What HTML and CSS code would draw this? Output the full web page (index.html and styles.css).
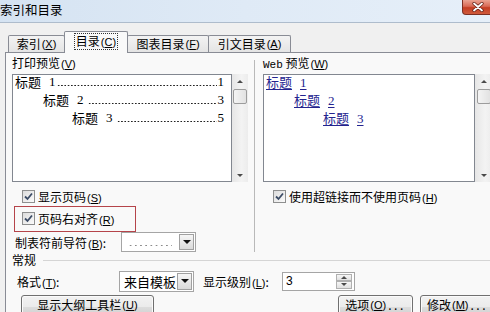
FILE: index.html
```html
<!DOCTYPE html>
<html lang="zh-CN">
<head>
<meta charset="utf-8">
<title>索引和目录</title>
<link rel="stylesheet" href="styles.css">
</head>
<body>
<div class="window">
  <div class="titlebar">
    <span class="title">索引和目录</span>
    <span class="close">
      <svg width="14" height="10" viewBox="0 0 14 10"><path d="M3 1.5 L11 8.5 M11 1.5 L3 8.5" stroke="#5a1a10" stroke-width="3.2" stroke-linecap="round"/><path d="M3 1.5 L11 8.5 M11 1.5 L3 8.5" stroke="#fff" stroke-width="1.8" stroke-linecap="round"/></svg>
    </span>
  </div>

  <div class="tabs">
    <div class="tab t1">索引<span class="mn">(<u>X</u>)</span></div>
    <div class="tab t2 active"><span class="focus">目录<span class="mn">(<u>C</u>)</span></span></div>
    <div class="tab t3">图表目录<span class="mn">(<u>F</u>)</span></div>
    <div class="tab t4">引文目录<span class="mn">(<u>A</u>)</span></div>
  </div>

  <div class="panel">
    <div class="upper">
      <div class="col col-left">
        <div class="label">打印预览<span class="mn">(<u>V</u>)</span></div>
        <div class="preview">
          <div class="pbox">
            <div class="toc lv1"><span class="h">标题</span><span class="num">1</span><span class="dots"></span><span class="pg">1</span></div>
            <div class="toc lv2"><span class="h">标题</span><span class="num">2</span><span class="dots gap"></span><span class="pg">3</span></div>
            <div class="toc lv3"><span class="h">标题</span><span class="num">3</span><span class="dots gap"></span><span class="pg">5</span></div>
          </div>
          <div class="vscroll"><span class="arr up"></span><span class="thumb"></span><span class="fill"></span><span class="arr down"></span></div>
        </div>
        <div class="check-row">
          <span class="cb"><svg width="9" height="9" viewBox="0 0 9 9"><path d="M1 4.5 L3.5 7 L8 1.5" fill="none" stroke="#3c4c66" stroke-width="1.8"/></svg></span>
          <span>显示页码<span class="mn">(<u>S</u>)</span></span>
        </div>
        <div class="highlight">
          <div class="check-row inner">
            <span class="cb"><svg width="9" height="9" viewBox="0 0 9 9"><path d="M1 4.5 L3.5 7 L8 1.5" fill="none" stroke="#3c4c66" stroke-width="1.8"/></svg></span>
            <span>页码右对齐<span class="mn">(<u>R</u>)</span></span>
          </div>
        </div>
        <div class="field-row leader-row">
          <span class="flabel">制表符前导符<span class="mn">(<u>B</u>)</span>:</span>
          <div class="select"><span class="val leader"></span><span class="dd"></span></div>
        </div>
      </div>

      <div class="sep"></div>

      <div class="col col-right">
        <div class="label"><span class="web">Web</span> 预览<span class="mn">(<u>W</u>)</span></div>
        <div class="preview">
          <div class="pbox wbox">
            <div class="wl lv1"><span class="lnk">标题<span class="num">1</span></span></div>
            <div class="wl lv2"><span class="lnk">标题<span class="num">2</span></span></div>
            <div class="wl lv3"><span class="lnk">标题<span class="num">3</span></span></div>
          </div>
          <div class="vscroll wide"><span class="arr up"></span><span class="thumb"></span><span class="fill"></span><span class="arr down"></span></div>
        </div>
        <div class="check-row">
          <span class="cb"><svg width="9" height="9" viewBox="0 0 9 9"><path d="M1 4.5 L3.5 7 L8 1.5" fill="none" stroke="#3c4c66" stroke-width="1.8"/></svg></span>
          <span>使用超链接而不使用页码<span class="mn">(<u>H</u>)</span></span>
        </div>
      </div>
    </div>

    <div class="group"><span class="gtitle">常规</span><span class="gline"></span></div>

    <div class="field-row format-row">
      <span class="flabel">格式<span class="mn">(<u>T</u>)</span>:</span>
      <div class="select"><span class="val">来自模板</span><span class="dd"></span></div>
      <span class="flabel level">显示级别<span class="mn">(<u>L</u>)</span>:</span>
      <div class="spin"><span class="sval">3</span><span class="sbtns"><span class="sb up"></span><span class="sb down"></span></span></div>
    </div>

    <div class="buttons">
      <div class="btn b-outline">显示大纲工具栏<span class="mn">(<u>U</u>)</span></div>
      <div class="spacer"></div>
      <div class="btn b-opt">选项<span class="mn">(<u>O</u>)</span><span class="ell">...</span></div>
      <div class="btn b-mod">修改<span class="mn">(<u>M</u>)</span><span class="ell">...</span></div>
    </div>
  </div>
</div>
</body>
</html>
```

FILE: styles.css
```css
* { box-sizing: border-box; }
html, body { margin: 0; padding: 0; }
body {
  width: 490px;
  height: 312px;
  overflow: hidden;
  background: #f0f0f0;
  font-family: "Noto Sans CJK SC", sans-serif;
  font-size: 12px;
  color: #000;
}
.window { width: 490px; height: 312px; overflow: hidden; }

.mn { font-family: "Liberation Sans", sans-serif; font-size: 11px; margin-left: 1px; }
.mn u { text-decoration-thickness: 1px; text-underline-offset: 1px; }

/* title bar */
.titlebar {
  height: 23px;
  display: flex;
  justify-content: space-between;
  align-items: flex-start;
  background: linear-gradient(90deg, #d5e3f2 0%, #dfeaf6 50%, #e6eff9 100%);
  border-bottom: 1px solid #aebccc;
}
.title { font-size: 12.5px; line-height: 20px; }
.close {
  width: 31px;
  height: 15px;
  margin-right: -3px;
  border: 1px solid #7c2f22;
  border-top: none;
  border-radius: 0 0 0 4px;
  background: linear-gradient(#eaa392 0%, #d96a55 45%, #c43d22 55%, #cf5a3c 100%);
  display: flex;
  align-items: center;
  justify-content: center;
}

/* tabs */
.tabs {
  height: 29px;
  display: flex;
  align-items: flex-end;
  padding-left: 8px;
}
.tab {
  height: 17px;
  border: 1px solid #898c95;
  border-bottom: none;
  margin-left: -1px;
  background: linear-gradient(#f3f3f3, #e4e4e4);
  display: flex;
  align-items: center;
  justify-content: center;
  line-height: 14px;
  border-radius: 2px 2px 0 0;
}
.t1 { width: 57px; margin-left: 0; }
.t2 { width: 64px; }
.t3 { width: 82px; }
.t4 { width: 83px; }
.tab.active {
  height: 22px;
  margin-bottom: -1px;
  background: #f9f9f9;
  position: relative;
  z-index: 1;
  padding-bottom: 3px;
}
.focus { border: 1px dotted #333; padding: 0 1px; line-height: 14px; }

/* panel */
.panel {
  margin-left: 5px;
  width: 500px;
  height: 270px;
  border: 1px solid #898c95;
  background: #f9f9f9;
  padding: 2px 0 0 6px;
}
.upper { display: flex; height: 197px; }
.col-left { width: 236px; }
.sep { width: 1px; margin: 5px 8px 0 6px; background: #b9b9b9; }
.col-right { width: 240px; }

.label { height: 16px; line-height: 16px; }
.web { font-family: "Liberation Mono", monospace; font-size: 11px; }

.preview { display: flex; margin-top: 3px; height: 108px; }
.pbox {
  width: 220px;
  height: 108px;
  border: 1px solid #828790;
  background: #fff;
  padding: 0 7px 0 2px;
}
.wbox { width: 212px; }
.toc {
  display: flex;
  align-items: flex-start;
  height: 18px;
  line-height: 14px;
  font-size: 13px;
  white-space: nowrap;
}
.toc .num, .wl .num { font-family: "Liberation Serif", serif; font-size: 13px; margin-left: 8px; }
.dots {
  flex: 1;
  height: 14px;
  margin: 0 1px 0 1px;
  background-image: radial-gradient(circle at 50% 50%, #222 0.65px, transparent 1px);
  background-size: 3.3px 3px;
  background-repeat: repeat-x;
  background-position: 0 9px;
}
.dots.gap { margin-left: 4px; }
.pg { font-family: "Liberation Serif", serif; font-size: 13px; }
.lv1 { padding-left: 0; }
.lv2 { padding-left: 28px; }
.lv3 { padding-left: 57px; }

.wl { height: 18px; line-height: 14px; font-size: 13px; white-space: nowrap; }
.lnk { color: #24248f; text-decoration: underline; text-decoration-thickness: 1px; text-underline-offset: 2px; }

.vscroll {
  width: 16px;
  height: 108px;
  display: flex;
  flex-direction: column;
  align-items: center;
  background: linear-gradient(90deg, #e6e6e6, #f3f3f3 60%, #ececec);
}
.vscroll.wide { width: 17px; }
.arr { width: 100%; height: 14px; display: flex; align-items: center; justify-content: center; }
.arr.up::after { content: ""; border-left: 3px solid transparent; border-right: 3px solid transparent; border-bottom: 3px solid #4a4a4a; }
.arr.down::after { content: ""; border-left: 3px solid transparent; border-right: 3px solid transparent; border-top: 3px solid #4a4a4a; }
.thumb {
  width: 14px;
  height: 15px;
  margin-top: 1px;
  border: 1px solid #9c9c9c;
  border-radius: 2px;
  background: linear-gradient(90deg, #f4f4f4, #e2e2e2);
}
.fill { flex: 1; }

/* checkboxes */
.check-row {
  display: flex;
  align-items: center;
  height: 16px;
  margin-top: 6px;
  padding-left: 10px;
  gap: 3px;
  white-space: nowrap;
}
.cb {
  width: 13px;
  height: 13px;
  border: 1px solid #8e8f8f;
  background: linear-gradient(135deg, #dcdcdc, #fbfbfb);
  display: flex;
  align-items: center;
  justify-content: center;
}
.highlight {
  margin: 2px 0 0 2px;
  width: 122px;
  height: 26px;
  border: 1px solid #b5444a;
  display: flex;
  align-items: center;
  padding-bottom: 1px;
}
.check-row.inner { margin-top: 0; padding-left: 7px; }

/* fields */
.field-row { display: flex; align-items: center; white-space: nowrap; }
.leader-row { height: 20px; }
.flabel { display: inline-block; }
.leader-row .flabel { width: 109px; padding-left: 3px; }
.select {
  display: flex;
  width: 75px;
  height: 20px;
  border: 1px solid #a5a5a5;
  background: #fff;
}
.select .val { flex: 1; padding-left: 4px; line-height: 18px; font-size: 13px; }
.select .val.leader {
  margin: 0 6px 0 6px;
  padding: 0;
  background-image: radial-gradient(circle at 50% 50%, #8a8a8a 0.6px, transparent 0.95px);
  background-size: 5.2px 3px;
  background-repeat: repeat-x;
  background-position: 0 11px;
}
.dd {
  width: 15px;
  margin: 1px;
  border: 1px solid #a0a0a0;
  background: linear-gradient(#f6f6f6, #dadada);
  display: flex;
  align-items: center;
  justify-content: center;
}
.dd::after { content: ""; border-left: 4px solid transparent; border-right: 4px solid transparent; border-top: 4px solid #111; }

.group { display: flex; align-items: center; height: 14px; margin-top: 1px; }
.gtitle { line-height: 14px; }
.gline { flex: 1; height: 1px; background: #d5d5d5; margin-left: 7px; }

.format-row { height: 22px; margin-top: 3px; }
.format-row .flabel { width: 107px; padding-left: 5px; }
.format-row .select { height: 21px; }
.format-row .select .val { line-height: 19px; }
.format-row .flabel.level { width: 88px; padding-left: 9px; }
.spin {
  display: flex;
  width: 73px;
  height: 19px;
  border: 1px solid #a5a5a5;
  background: #fff;
}
.sval { flex: 1; padding-left: 3px; font-family: "Liberation Sans", sans-serif; font-size: 12px; line-height: 17px; }
.sbtns { width: 16px; display: flex; flex-direction: column; margin: 1px 2px 1px 0; }
.sb {
  flex: 1;
  border: 1px solid #b0b0b0;
  background: linear-gradient(#f6f6f6, #e0e0e0);
  display: flex;
  align-items: center;
  justify-content: center;
}
.sb.up::after { content: ""; border-left: 3px solid transparent; border-right: 3px solid transparent; border-bottom: 3px solid #4a4a4a; }
.sb.down::after { content: ""; border-left: 3px solid transparent; border-right: 3px solid transparent; border-top: 3px solid #4a4a4a; }

/* buttons */
.buttons { display: flex; margin-top: 3px; padding-left: 9px; }
.spacer { flex: 0 0 184px; }
.btn {
  height: 23px;
  border: 1px solid #707070;
  border-radius: 3px;
  background: linear-gradient(#f2f2f2 0%, #ebebeb 50%, #dddddd 51%, #cfcfcf 100%);
  box-shadow: inset 0 0 0 1px #fbfbfb;
  display: flex;
  align-items: center;
  justify-content: center;
  white-space: nowrap;
  line-height: 14px;
  padding-bottom: 4px;
  flex: none;
}
.ell { letter-spacing: 2.5px; margin-left: 2px; }
.b-outline { width: 133px; }
.b-opt { width: 75px; }
.b-mod { width: 75px; margin-left: 7px; }
```
